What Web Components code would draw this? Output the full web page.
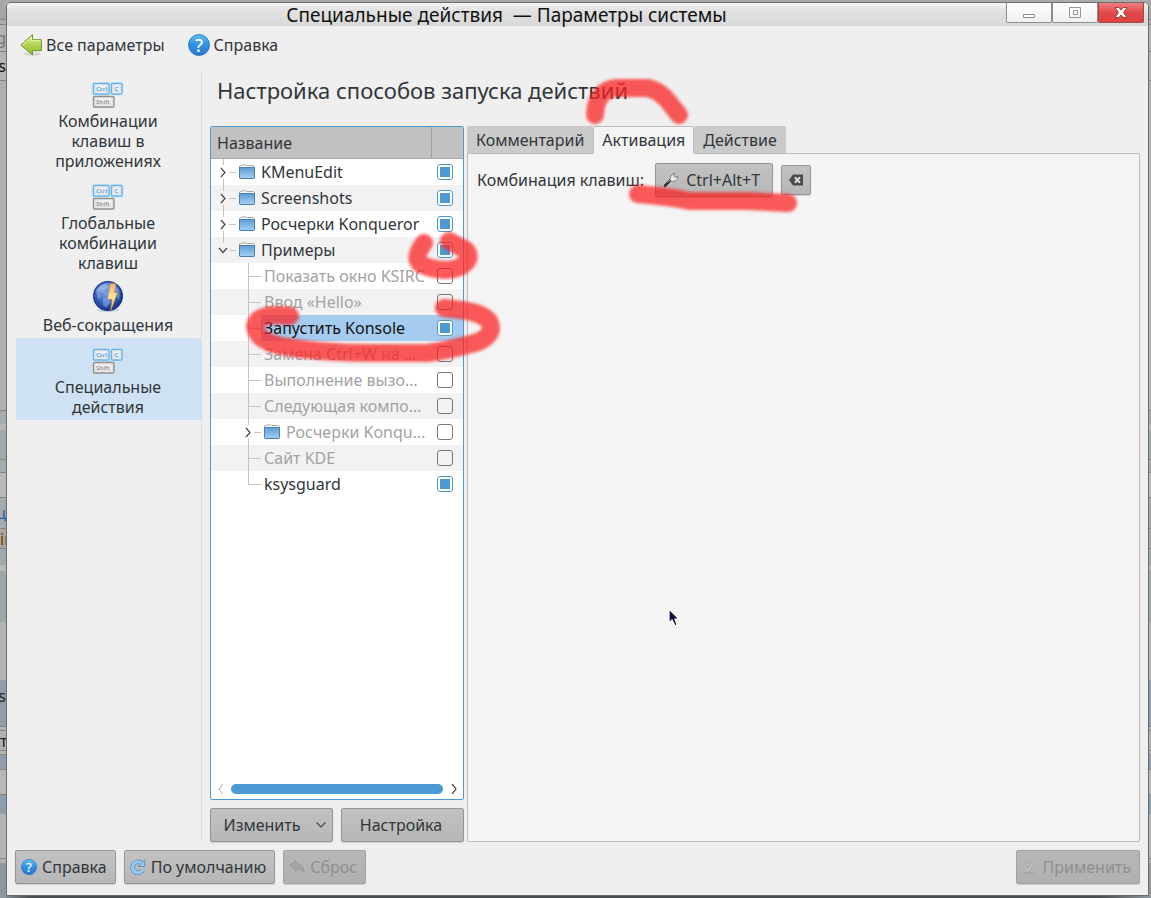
<!DOCTYPE html>
<html lang="ru">
<head>
<meta charset="utf-8">
<title>Специальные действия — Параметры системы</title>
<style>
  html {
    --text: #31363b;
    --window: #efefef;
    --accent: #4c99d3;
    --line: #bdbdbd;
  }

  body {
    margin: 0;
    font: 16px/20px "Noto Sans", "Open Sans", sans-serif;
    color: var(--text);
  }
</style>
</head>
<body>

<settings-app></settings-app>

<script>
const makeTemplate = (markup) => {
  const el = document.createElement('template');
  el.innerHTML = markup;
  return el;
};

class BaseElement extends HTMLElement {
  constructor() {
    super();
    this.attachShadow({mode: 'open', delegatesFocus: !!this.constructor.formAssociated});
    this.shadowRoot.appendChild(this.constructor.template.content.cloneNode(true));
  }
}

const icons = {
  back: `
<svg viewBox="0 0 22 22">
  <defs>
    <linearGradient id="b" x1="0" y1="0" x2="0" y2="1">
      <stop offset="0" stop-color="#dcec8a"/><stop offset="1" stop-color="#8dba20"/>
    </linearGradient>
  </defs>
  <ellipse cx="12" cy="20" rx="9" ry="1.6" fill="#000" opacity=".1"/>
  <path d="M.8 11 12.5.8V5.7H21.4V16.6H12.5V21Z" fill="url(#b)" stroke="#6b9a2b" stroke-width="1" stroke-linejoin="round"/>
  <path d="M2.6 11 11.5 3V6.7H20.4" fill="none" stroke="#eff7c0" stroke-width=".8"/>
</svg>`,

  help: `
<svg viewBox="0 0 22 22">
  <defs>
    <linearGradient id="h" x1="0" y1="0" x2="0" y2="1">
      <stop offset="0" stop-color="#5cc0f5"/><stop offset=".5" stop-color="#2f8fe6"/><stop offset="1" stop-color="#2a76d4"/>
    </linearGradient>
  </defs>
  <circle cx="11" cy="11" r="10.500" fill="url(#h)" stroke="#2468b4" stroke-width=".8"/>
  <text x="11" y="17.500" text-anchor="middle" font-size="18" font-weight="500" fill="#fff">?</text>
</svg>`,

  keys: `
<svg viewBox="0 0 32 32">
  <g fill="#f2f2f4" stroke="#6fb3e6" stroke-width="1.4">
    <rect x="1" y="4.400" width="16" height="10.600" rx="1.200" stroke="#bfe6fb" stroke-width="3"/>
    <rect x="19" y="4.400" width="11" height="10.600" rx="1.200" stroke="#bfe6fb" stroke-width="3"/>
    <rect x="1.500" y="4.500" width="15.500" height="10.500" rx="1.200"/>
    <rect x="19.500" y="4.500" width="10.500" height="10.500" rx="1.200"/>
    <rect x="1.500" y="17.500" width="20.500" height="10.500" rx="1.200" stroke="#8f8f8f"/>
  </g>
  <g fill="none" stroke="#d4d4d8" stroke-width=".8">
    <rect x="3.200" y="5.800" width="12" height="7"/>
    <rect x="21.200" y="5.800" width="7" height="7"/>
    <rect x="3.200" y="18.800" width="17" height="7"/>
  </g>
  <g font-size="6" font-weight="700">
    <text x="4" y="11.800" fill="#5ea6de">Ctrl</text>
    <text x="22.500" y="11.800" fill="#5ea6de">C</text>
    <text x="4" y="24.800" fill="#999">Shift</text>
  </g>
</svg>`,

  globe: `
<svg viewBox="0 3 32 32">
  <defs>
    <radialGradient id="g" cx=".45" cy=".4" r=".6">
      <stop offset="0" stop-color="#7fa6e4"/><stop offset=".6" stop-color="#3560b8"/><stop offset="1" stop-color="#182f80"/>
    </radialGradient>
    <linearGradient id="z" x1="0" y1="0" x2="0" y2="1">
      <stop offset="0" stop-color="#fbb36c"/><stop offset=".5" stop-color="#fbe3a0"/><stop offset="1" stop-color="#f5c400"/>
    </linearGradient>
  </defs>
  <ellipse cx="16" cy="30" rx="11" ry="1.8" fill="#8fc2e8" opacity=".6"/>
  <circle cx="16" cy="16" r="14.700" fill="url(#g)" stroke="#1c357f" stroke-width=".8"/>
  <path d="M4 12Q7 4 14 4L16 7 12 9 13 12 8 14 9 18 6 19ZM11 18 17 19 18 23 14 28 11 25ZM24 8 28 14 27 20 23 15Z" fill="#a9c8f2" opacity=".4"/>
  <path d="M3.500 12Q8 3 16 3T28.500 12Q16 7 3.500 12Z" fill="#fff" opacity=".25"/>
  <path d="M18.500 3.500 24 3.800 22.500 12.500 25.500 12.800 18.500 31.500 20 19.500 15.500 19Z" fill="url(#z)" stroke="#b98a3a" stroke-width=".5"/>
</svg>`,

  folder: `
<svg viewBox="0 0 16 16">
  <defs>
    <linearGradient id="f" x1="0" y1="0" x2="0" y2="1">
      <stop offset="0" stop-color="#5f9dd3"/><stop offset="1" stop-color="#a4d0f6"/>
    </linearGradient>
  </defs>
  <path d="M.5 4V2L1.500 1.500 6.500.5 7.500 1.500H14.500L15.500 2.500V5H.5Z" fill="#f6f6f6" stroke="#a9a9a9"/>
  <path d="M.5 3.500H15.500V14L15 14.500H1L.5 14Z" fill="url(#f)" stroke="#4a80b0"/>
</svg>`,

  wrench: `
<svg viewBox="0 0 16 16">
  <path d="M1.500 14 8.500 7" stroke="#fff" stroke-width="4.500" stroke-linecap="round" opacity=".4"/>
  <path d="M1.800 14 8 7.500" stroke="#303030" stroke-width="2.800" stroke-linecap="round"/>
  <path d="M7.500 8.500Q6.500 5 9 2.500L12 1 10.500 4 12 5.500 15 4.500Q15 7.500 12 9 9.500 10 7.500 8.500Z" fill="#ececec" stroke="#6d6d6d" stroke-width=".8"/>
  <path d="M4.500 10.500 8 7" stroke="#d2d2d2" stroke-width=".8"/>
</svg>`,

  clear: `
<svg viewBox="0 0 16 16">
  <path d="M1 8 5 2.500H15V13.500H5Z" fill="#4b4b4b"/>
  <path d="M6.800 5.300 12 10.700M12 5.300 6.800 10.700" stroke="#dcdcdc" stroke-width="2"/>
</svg>`,

  reload: `
<svg viewBox="0 0 16 16">
  <path d="M12.500 11.500A5.500 5.500 0 1 1 11.500 4" fill="none" stroke="#4a88c4" stroke-width="4.400"/>
  <path d="M14.800.8V7.500H8Z" fill="#98c8f0" stroke="#4a88c4" stroke-width=".8"/>
  <path d="M12.500 11.500A5.500 5.500 0 1 1 11.500 4" fill="none" stroke="#98c8f0" stroke-width="3.200"/>
</svg>`,

  undo: `
<svg viewBox="0 0 16 16">
  <path d="M.7 6.500 7 1.200V4.500Q14.800 5 15.300 14.500 12.500 9.500 7 9.500V12.500Z" fill="#a5a5a5" stroke="#979797" stroke-width=".8"/>
</svg>`,

  apply: `
<svg viewBox="0 0 16 16" fill="none">
  <path d="M3 14H12" stroke="#9c9c9c"/>
  <path d="M2.500 8.500 6 12 11.500 3" stroke="#a0a0a0" stroke-width="3"/>
  <path d="M2.500 8.500 6 12 11.500 3" stroke="#c2c2c2" stroke-width="1.800"/>
</svg>`,

  chevron: `
<svg viewBox="0 0 10 10">
  <path d="M.5 2.500 5 7 9.500 2.500" fill="none" stroke="#444" stroke-width="1.200"/>
</svg>`
};

class SettingsIcon extends BaseElement {
  static template = makeTemplate(`
<style>
  :host {
    display: block;
    flex: none;
    width: var(--icon-size, 16px);
    height: var(--icon-size, 16px);
  }

  svg {
    display: block;
    width: 100%;
    height: 100%;
    overflow: visible;
  }
</style>
`);

  connectedCallback() {
    if (!this.shadowRoot.querySelector('svg')) {
      this.shadowRoot.append(makeTemplate(icons[this.getAttribute('name')]).content);
    }
  }
}
customElements.define('settings-icon', SettingsIcon);

// Grey push button; the icon goes to the "icon" slot
class PushButton extends BaseElement {
  // lets a <label for> outside point at it
  static formAssociated = true;

  static template = makeTemplate(`
<style>
  :host {
    display: flex;
    height: 34px;
  }

  button {
    flex: 1;
    display: flex;
    align-items: center;
    justify-content: center;
    gap: var(--button-gap, 5px);
    margin: 0;
    padding: 0 var(--button-end, 8px) 0 var(--button-start, 5px);
    border: 1px solid #959595;
    border-radius: 2px;
    background: linear-gradient(#c2c2c2, #b7b7b7);
    box-shadow: 0 1px 1px #cfcfcf;
    font: inherit;
    color: var(--text);
    white-space: nowrap;
  }

  button:disabled {
    border-color: #a2a2a2;
    background: linear-gradient(#b7b7b7, #b0b0b0);
    color: #8f8f8f;
  }
</style>
<button type="button"><slot name="icon"></slot><slot></slot><slot name="end"></slot></button>
`);

  connectedCallback() {
    const button = this.shadowRoot.querySelector('button');
    button.disabled = this.hasAttribute('disabled');
    if (this.hasAttribute('label')) {
      button.setAttribute('aria-label', this.getAttribute('label'));
    }
  }
}
customElements.define('push-button', PushButton);

class ToolLink extends BaseElement {
  static template = makeTemplate(`
<style>
  :host {
    display: block;
    --icon-size: 22px;
  }

  a {
    display: flex;
    align-items: center;
    gap: 4px;
    color: inherit;
    text-decoration: none;
  }
</style>
<a href="#"><slot></slot></a>
`);
}
customElements.define('tool-link', ToolLink);

class ModuleItem extends BaseElement {
  static template = makeTemplate(`
<style>
  :host {
    display: block;
    --icon-size: 32px;
  }

  :host([selected]) {
    background: #cfe2f3;
  }

  a {
    display: flex;
    flex-direction: column;
    align-items: center;
    padding: 7px 24px 3px 23px;
    color: inherit;
    text-align: center;
    text-decoration: none;
  }
</style>
<a href="#"><slot name="icon"></slot><span><slot></slot></span></a>
`);
}
customElements.define('module-item', ModuleItem);

class TitleBar extends BaseElement {
  static template = makeTemplate(`
<style>
  :host {
    display: flex;
    height: 23px;
    padding-right: 4px;
    border-radius: 4px 4px 0 0;
    background: linear-gradient(#f6f6f6, #e2e2e2 30%, #d8d8d8);
    color: #111;
  }

  h1 {
    flex: 1;
    margin: 0;
    font-size: 19px;
    line-height: 24px;
    font-weight: 400;
    text-align: center;
    white-space: pre;
  }

  div {
    display: flex;
  }

  button {
    display: flex;
    align-items: center;
    justify-content: center;
    width: 46px;
    height: 20px;
    margin: 0;
    padding: 0;
    border: 1px solid #8d8d8d;
    border-top: 0;
    border-radius: 0 0 2px 2px;
    background: linear-gradient(#fff, #f0f0f0);
  }

  .close {
    border-color: #a04a4a;
    background: linear-gradient(#f08080, #e34a4a 50%, #de4040);
  }
</style>
<h1><slot></slot></h1>
<div>
  <button type="button" aria-label="Свернуть">
    <svg width="14" height="14"><path d="M1.500 8.500H12.500V11.500H1.500Z" fill="#fff" stroke="#8c8c8c"/></svg>
  </button>
  <button type="button" aria-label="Развернуть">
    <svg width="14" height="14" fill="none" stroke="#959595"><path d="M1.500 1.500H12.500V11.500H1.500Z"/><path d="M5.500 4.500H9.500V8.500H5.500Z"/></svg>
  </button>
  <button type="button" class="close" aria-label="Закрыть">
    <svg width="14" height="14"><path d="M1 1.500H5L7 4 9 1.500H13L9.500 6.500 13 11.500H9L7 9 5 11.500H1L4.500 6.500Z" fill="#fff" stroke="#a03c3c"/></svg>
  </button>
</div>
`);
}
customElements.define('title-bar', TitleBar);

const rows = [
  {text: 'KMenuEdit', folder: true, checked: true},
  {text: 'Screenshots', folder: true, checked: true},
  {text: 'Росчерки Konqueror', folder: true, checked: true},
  {text: 'Примеры', folder: true, checked: true, open: true, last: true},
  {text: 'Показать окно KSIRC', child: true},
  {text: 'Ввод «Hello»', child: true},
  {text: 'Запустить Konsole', child: true, checked: true, selected: true},
  {text: 'Замена Ctrl+W на …', child: true},
  {text: 'Выполнение вызо…', child: true},
  {text: 'Следующая компо…', child: true},
  {text: 'Росчерки Konqu…', child: true, folder: true},
  {text: 'Сайт KDE', child: true},
  {text: 'ksysguard', child: true, checked: true, last: true}
];

// Guide lines and the expander arrow in front of a row
const branch = (row) => {
  const x = row.child ? 37 : 12;
  const w = row.child ? 50 : 25;
  let lines = `M${x}.5 0V${row.last ? 14 : 26}M${x} 13.5H${w}`;
  let arrow = '';
  if (row.folder) {
    lines = `M${x}.5 0V6M${x + 6} 13.5H${w}` + (row.last ? '' : `M${x}.5 20V26`);
    arrow = row.open
      ? `<path d="M${x - 4} 11 ${x} 15.5 ${x + 4} 11" stroke="#444" stroke-width="1.2"/>`
      : `<path d="M${x - 2} 9 ${x + 2} 13.5 ${x - 2} 18" stroke="#444" stroke-width="1.2"/>`;
  }
  return `<svg width="${w}" height="26" fill="none"><path d="${lines}" stroke="#c4c4c4"/>${arrow}</svg>`;
};

class ActionTree extends BaseElement {
  static template = makeTemplate(`
<style>
  :host {
    display: flex;
    flex-direction: column;
    border: 1px solid var(--accent);
    border-radius: 2px;
    background: #fff;
  }

  table {
    width: 100%;
    border-collapse: separate;
    border-spacing: 0;
    table-layout: fixed;
  }

  th, td {
    padding: 0;
    font-weight: 400;
    text-align: left;
    white-space: nowrap;
  }

  th {
    height: 31px;
    padding-left: 6px;
    border-bottom: 1px solid #a8a8a8;
    background: #c1c1c1;
  }

  th:last-child {
    width: 32px;
    padding: 0;
    border-left: 1px solid #a2a2a2;
    box-sizing: border-box;
  }

  td {
    height: 26px;
  }

  tbody tr:nth-child(even) {
    background: #f2f2f2;
  }

  td:first-child > div {
    display: flex;
    align-items: center;
  }

  svg {
    display: block;
    flex: none;
  }

  settings-icon {
    margin: 0 3px;
  }

  label {
    flex: 1;
    padding-left: 3px;
    line-height: 26px;
  }

  .off {
    color: #a3a3a3;
  }

  .selected label, .selected td:last-child {
    background: #a5ccee;
    color: #111;
  }

  input {
    appearance: none;
    display: block;
    box-sizing: border-box;
    width: 16px;
    height: 16px;
    margin: 0 0 0 6px;
    border: 1px solid #777;
    border-radius: 3px;
    background: transparent;
  }

  input:checked {
    border-color: var(--accent);
    background: linear-gradient(var(--accent), var(--accent)) center / 10px 10px no-repeat #fff;
  }

  .scroll {
    display: flex;
    align-items: center;
    gap: 6px;
    margin-top: auto;
    padding: 5px;
  }

  .scroll i {
    flex: 1;
    height: 10px;
    border-radius: 5px;
    background: var(--accent);
  }
</style>
<table>
  <thead><tr><th>Название</th><th></th></tr></thead>
  <tbody></tbody>
</table>
<div class="scroll">
  <svg width="9" height="10" fill="none"><path d="M7 0 3 5 7 10" stroke="#aaa"/></svg>
  <i></i>
  <svg width="9" height="10" fill="none"><path d="M3 0 7 5 3 10" stroke="#333" stroke-width="1.200"/></svg>
</div>
`);

  connectedCallback() {
    this.shadowRoot.querySelector('tbody').innerHTML = rows.map((row, i) => `
      <tr class="${row.checked ? '' : 'off'} ${row.selected ? 'selected' : ''}">
        <td><div>${branch(row)}${row.folder ? '<settings-icon name="folder"></settings-icon>' : ''}<label for="row${i}">${row.text}</label></div></td>
        <td><input type="checkbox" id="row${i}" ${row.checked ? 'checked' : ''}></td>
      </tr>`).join('');
  }
}
customElements.define('action-tree', ActionTree);

class TabPanel extends BaseElement {
  static template = makeTemplate(`
<style>
  :host {
    display: flex;
    flex-direction: column;
  }

  .tabs {
    display: flex;
  }

  button {
    height: 28px;
    margin: 0 0 -1px;
    padding: 0 8px;
    border: 1px solid transparent;
    border-bottom-color: var(--line);
    border-radius: 2px 2px 0 0;
    background: #cacaca;
    font: inherit;
    color: var(--text);
  }

  button[aria-selected=true] {
    position: relative;
    border-color: var(--line);
    border-bottom-color: #f4f4f4;
    background: #f4f4f4;
  }

  .panel {
    flex: 1;
    padding: 9px;
    border: 1px solid var(--line);
    border-radius: 0 2px 2px 2px;
    background: #f4f4f4;
  }
</style>
<div class="tabs" role="tablist">
  <button type="button" role="tab">Комментарий</button>
  <button type="button" role="tab" aria-selected="true">Активация</button>
  <button type="button" role="tab">Действие</button>
</div>
<div class="panel" role="tabpanel"><slot></slot></div>
`);
}
customElements.define('tab-panel', TabPanel);

// Slices of the dimmed desktop seen beside the window
const slices = [
  {h: 20, bg: '#a6a6a6', line: true},
  {h: 5, bg: '#acacac', line: true},
  {h: 27, bg: '#b2b2b2', line: true, text: 'g', ink: '#777', end: true},
  {h: 29, bg: '#b4b4b4', line: true, text: 'ns', ink: '#111', end: true},
  {h: 330, bg: '#b0b0b0', line: true},
  {h: 13, bg: '#a3abae'},
  {h: 6, bg: '#b5b8b9'},
  {h: 30, bg: '#9fa9ac', line: true},
  {h: 13, bg: '#a3abae', line: true},
  {h: 25, bg: '#b8b8b8', line: true},
  {h: 31, bg: '#a3abae', line: true, text: 'ц', ink: '#1f5f9f', end: true},
  {h: 20, bg: '#a9a6a3', line: true, text: 'in', ink: '#7a3a10'},
  {h: 16, bg: '#9fa9ac'},
  {h: 6, bg: '#b8b8b8'},
  {h: 51, bg: '#9da7a9'},
  {h: 58, bg: '#b4b4b4'},
  {h: 32, bg: '#8f9dab', text: 's', ink: '#222', end: true},
  {h: 15, bg: '#8f9dab', line: true},
  {h: 4, bg: '#b4b4b4', line: true},
  {h: 20, bg: '#b0b0b0', line: true, text: 'т', ink: '#222'},
  {h: 4, bg: '#b4b4b4', line: true},
  {h: 15, bg: '#8f9dab', line: true},
  {h: 25, bg: '#b8b8b8', line: true},
  {h: 19, bg: '#8e9dab'},
  {h: 45, bg: '#b4b4b4', line: true},
  {h: 4, bg: '#b0b0b0'},
  {h: 40, bg: '#8f979d'}
];

class DesktopStrip extends BaseElement {
  static template = makeTemplate(`
<style>
  :host {
    display: block;
    overflow: hidden;
    background: #8f979d;
  }

  div {
    display: flex;
    align-items: center;
    box-sizing: border-box;
  }

  .line {
    border-bottom: 1px solid #858585;
  }

  .end {
    justify-content: flex-end;
  }
</style>
`);

  connectedCallback() {
    for (const slice of slices) {
      const div = document.createElement('div');
      div.style.height = slice.h + 'px';
      div.style.background = slice.bg;
      div.classList.toggle('line', !!slice.line);
      if (slice.text && this.hasAttribute('texts')) {
        div.classList.toggle('end', !!slice.end);
        div.style.color = slice.ink;
        div.textContent = slice.text;
      }
      this.shadowRoot.append(div);
    }
  }
}
customElements.define('desktop-strip', DesktopStrip);

// Marker strokes and the mouse pointer, above everything
class MarkerLayer extends BaseElement {
  static template = makeTemplate(`
<style>
  :host {
    position: absolute;
    top: 0;
    left: 0;
    z-index: 5;
    pointer-events: none;
  }

  svg {
    display: block;
  }
</style>
<svg width="820" height="640" fill="none">
  <defs>
    <filter id="soft" filterUnits="userSpaceOnUse" x="0" y="0" width="820" height="640"><feGaussianBlur stdDeviation="1.800"/></filter>
  </defs>
  <g stroke="#fb2222" stroke-width="18" stroke-linecap="round" stroke-linejoin="round">
    <path d="M595 115Q596 90 616 88H648Q660 91 668 101L679 115" opacity=".74" filter="url(#soft)"/>
    <path d="M638 194Q665 196 690 201H748L788 203" opacity=".74" filter="url(#soft)"/>
    <path d="M424 243Q412 259 422 265 442 273 458 268 474 260 466 250L449 241" opacity=".74" filter="url(#soft)"/>
    <path d="M290 316Q256 312 255 327 257 341 282 346 320 353 370 353H428Q450 350 478 342 496 334 489 321 482 313 462 310L444 308" opacity=".74" filter="url(#soft)"/>
  </g>
  <path d="M669 609V623L672 620 675 626 677 625 675 619H679Z" fill="#10143c" stroke="#fff" stroke-width="1.200"/>
</svg>
`);
}
customElements.define('marker-layer', MarkerLayer);

class SettingsApp extends BaseElement {
  static template = makeTemplate(`
<style>
  :host {
    display: grid;
    grid-template-columns: 6px minmax(0, 1fr) 2px;
    height: 100vh;
    position: relative;
    overflow: hidden;
    background: linear-gradient(90deg, #8f979d, #4b4e51 30px, #4b4e51 calc(100% - 50px), #8f979d);
  }

  .frame {
    display: flex;
    flex-direction: column;
    margin-bottom: 2px;
    padding-top: 2px;
    background: #ababab;
  }

  .window {
    flex: 1;
    min-height: 0;
    display: flex;
    flex-direction: column;
    border: 1px solid #6c6c6c;
    border-radius: 5px 5px 0 0;
    background: var(--window);
  }

  .tools {
    display: flex;
    align-items: center;
    gap: 23px;
    height: 38px;
    padding: 0 13px;
  }

  .main {
    flex: 1;
    min-height: 0;
    display: flex;
    gap: 8px;
    padding: 8px 8px 8px 9px;
  }

  nav {
    width: 185px;
    border-right: 1px solid #cfe0f0;
  }

  .page {
    flex: 1;
    display: flex;
    flex-direction: column;
  }

  h2 {
    margin: 0;
    padding: 3px 7px 21px;
    font-size: 22px;
    line-height: 30px;
    font-weight: 400;
  }

  .columns {
    flex: 1;
    display: grid;
    grid-template-columns: 254px 1fr;
    gap: 3px;
  }

  .list {
    display: flex;
    flex-direction: column;
    gap: 8px;
  }

  action-tree {
    flex: 1;
  }

  .pair {
    display: grid;
    grid-template-columns: 1fr 1fr;
    gap: 8px;
  }

  .menu {
    --icon-size: 10px;
    --button-start: 12px;
    --button-gap: 16px;
    --button-end: 5px;
  }

  .shortcut {
    display: flex;
    align-items: center;
    gap: 8px;
  }

  .shortcut label {
    padding-right: 3px;
  }

  .key {
    --button-start: 7px;
    --button-gap: 7px;
    --button-end: 12px;
  }

  .erase {
    --button-start: 6px;
    --button-end: 6px;
    height: 30px;
  }

  footer {
    display: flex;
    gap: 8px;
    padding: 0 8px 11px;
  }

  .push {
    margin-left: auto;
  }
</style>
<desktop-strip texts></desktop-strip>
<div class="frame">
  <div class="window">
    <title-bar>Специальные действия  — Параметры системы</title-bar>
    <div class="tools">
      <tool-link><settings-icon name="back"></settings-icon>Все параметры</tool-link>
      <tool-link><settings-icon name="help"></settings-icon>Справка</tool-link>
    </div>
    <div class="main">
      <nav>
        <module-item><settings-icon slot="icon" name="keys"></settings-icon>Комбинации клавиш в приложениях</module-item>
        <module-item><settings-icon slot="icon" name="keys"></settings-icon>Глобальные комбинации клавиш</module-item>
        <module-item><settings-icon slot="icon" name="globe"></settings-icon>Веб-сокращения</module-item>
        <module-item selected><settings-icon slot="icon" name="keys"></settings-icon>Специальные действия</module-item>
      </nav>
      <div class="page">
        <h2>Настройка способов запуска действий</h2>
        <div class="columns">
          <div class="list">
            <action-tree></action-tree>
            <div class="pair">
              <push-button class="menu">Изменить<settings-icon slot="end" name="chevron"></settings-icon></push-button>
              <push-button>Настройка</push-button>
            </div>
          </div>
          <tab-panel>
            <div class="shortcut">
              <label for="key">Комбинация клавиш:</label>
              <push-button id="key" class="key"><settings-icon slot="icon" name="wrench"></settings-icon>Ctrl+Alt+T</push-button>
              <push-button class="erase" label="Очистить"><settings-icon slot="icon" name="clear"></settings-icon></push-button>
            </div>
          </tab-panel>
        </div>
      </div>
    </div>
    <footer>
      <push-button><settings-icon slot="icon" name="help"></settings-icon>Справка</push-button>
      <push-button><settings-icon slot="icon" name="reload"></settings-icon>По умолчанию</push-button>
      <push-button disabled><settings-icon slot="icon" name="undo"></settings-icon>Сброс</push-button>
      <push-button disabled class="push"><settings-icon slot="icon" name="apply"></settings-icon>Применить</push-button>
    </footer>
  </div>
</div>
<desktop-strip></desktop-strip>
<marker-layer></marker-layer>
`);
}
customElements.define('settings-app', SettingsApp);
</script>
</body>
</html>
